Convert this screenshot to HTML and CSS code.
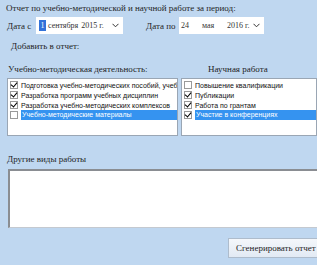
FILE: index.html
```html
<!DOCTYPE html>
<html lang="ru">

<head>
    <meta charset="UTF-8">
    <title>Отчет</title>
    <link rel="stylesheet" href="styles.css">
</head>

<body>
    <div class="form">
        <p class="title">Отчет по учебно-методической и научной работе за период:</p>

        <div class="dates">
            <span class="date_label first">Дата с</span>
            <div class="picker wide">
                <span class="sel">1</span>
                <span class="month">сентября</span>
                <span class="year">2015 г.</span>
                <svg class="chev" width="7" height="5" viewBox="0 0 7 5"><path d="M0.5 0.8 L3.5 3.8 L6.5 0.8" fill="none" stroke="#333" stroke-width="1"/></svg>
            </div>
            <span class="date_label second">Дата по</span>
            <div class="picker">
                <span class="day">24</span>
                <span class="month2">мая</span>
                <span class="year">2016 г.</span>
                <svg class="chev" width="7" height="5" viewBox="0 0 7 5"><path d="M0.5 0.8 L3.5 3.8 L6.5 0.8" fill="none" stroke="#333" stroke-width="1"/></svg>
            </div>
        </div>

        <p class="add">Добавить в отчет:</p>

        <div class="lists">
            <div class="col left">
                <p class="head">Учебно-методическая деятельность:</p>
                <div class="listbox">
                    <div class="row"><span class="box on"></span><span class="txt">Подготовка учебно-методических пособий, учебников</span></div>
                    <div class="row"><span class="box on"></span><span class="txt">Разработка программ учебных дисциплин</span></div>
                    <div class="row"><span class="box on"></span><span class="txt">Разработка учебно-методических комплексов</span></div>
                    <div class="row active"><span class="box"></span><span class="txt">Учебно-методические материалы</span></div>
                </div>
            </div>
            <div class="col right">
                <p class="head center">Научная работа</p>
                <div class="listbox">
                    <div class="row"><span class="box"></span><span class="txt">Повышение квалификации</span></div>
                    <div class="row"><span class="box on"></span><span class="txt">Публикации</span></div>
                    <div class="row"><span class="box on"></span><span class="txt">Работа по грантам</span></div>
                    <div class="row active"><span class="box on"></span><span class="txt">Участие в конференциях</span></div>
                </div>
            </div>
        </div>

        <p class="other">Другие виды работы</p>
        <textarea class="notes"></textarea>

        <div class="actions">
            <button class="generate">Сгенерировать отчет</button>
        </div>
    </div>
</body>

</html>
```

FILE: styles.css
```css
* {
    margin: 0;
    padding: 0;
    box-sizing: border-box;
}

body {
    width: 317px;
    height: 265px;
    overflow: hidden;
    background: #bfd7f0;
    font-family: "Liberation Serif", "DejaVu Serif", serif;
    font-size: 9px;
    color: #1e1e1e;
}

.form {
    padding: 2px 0 0 6px;
}

.title {
    line-height: 12px;
    white-space: nowrap;
}

.dates {
    display: flex;
    align-items: center;
    margin-top: 3px;
    height: 17px;
    white-space: nowrap;
}

.date_label.first {
    margin-left: 1px;
    width: 29px;
}

.date_label.second {
    margin-left: 23px;
    width: 33px;
}

.picker {
    display: flex;
    align-items: center;
    height: 17px;
    width: 85px;
    background: #fff;
    padding: 0 4px 0 2px;
    font-size: 8px;
    color: #333;
    overflow: hidden;
}

.picker.wide {
    width: 87px;
    padding-left: 3px;
}

.sel {
    background: #3272d9;
    color: #fff;
    height: 11px;
    line-height: 11px;
    width: 7px;
    text-align: center;
    margin-right: 2px;
}

.month {
    margin-right: 3px;
}

.day {
    width: 21px;
}

.month2 {
    width: 25px;
}

.chev {
    flex: none;
    margin-left: auto;
}

.add {
    margin: 6px 0 0 5px;
    line-height: 12px;
}

.lists {
    display: flex;
    gap: 3px;
    margin-top: 11px;
}

.col.left {
    width: 171px;
    margin-left: 1px;
}

.col.right {
    width: 137px;
}

.head {
    line-height: 12px;
    height: 15px;
    padding-left: 1px;
    white-space: nowrap;
}

.head.center {
    padding-left: 27px;
}

.listbox {
    height: 58px;
    background: #fff;
    border: 1px solid #9aa6b4;
    padding-top: 1px;
    overflow: hidden;
}

.row {
    display: flex;
    align-items: center;
    height: 10px;
    font-family: "Liberation Sans", sans-serif;
    font-size: 7px;
    white-space: nowrap;
    color: #111;
}

.box {
    flex: none;
    width: 8px;
    height: 8px;
    margin: 0 3px 0 2px;
    border: 1px solid #9a9a9a;
    background: #fff;
    position: relative;
}

.box.on::after {
    content: "";
    position: absolute;
    left: 1px;
    top: -1px;
    width: 3px;
    height: 5px;
    border: solid #000;
    border-width: 0 1.5px 1.5px 0;
    transform: rotate(40deg);
}

.row.active .txt {
    flex: 1;
    background: #3593f0;
    color: #fff;
    height: 10px;
    line-height: 10px;
    padding-left: 1px;
}

.other {
    margin: 17px 0 0 1px;
    line-height: 12px;
}

.notes {
    display: block;
    margin: 4px 0 0 2px;
    width: 315px;
    height: 59px;
    background: #fff;
    border: 1px solid #c4c9d0;
    border-top: 2px solid #8a8d92;
    border-left: 2px solid #8a8d92;
    resize: none;
}

.actions {
    display: flex;
    justify-content: flex-end;
    margin-top: 10px;
}

.generate {
    width: 91px;
    height: 20px;
    margin-right: -2px;
    background: linear-gradient(#f4f7fb, #e2eaf4);
    border: 1px solid #aebccc;
    font-family: "Liberation Serif", "DejaVu Serif", serif;
    font-size: 9px;
    color: #1e1e1e;
    text-align: left;
    padding-left: 7px;
    white-space: nowrap;
}
```
